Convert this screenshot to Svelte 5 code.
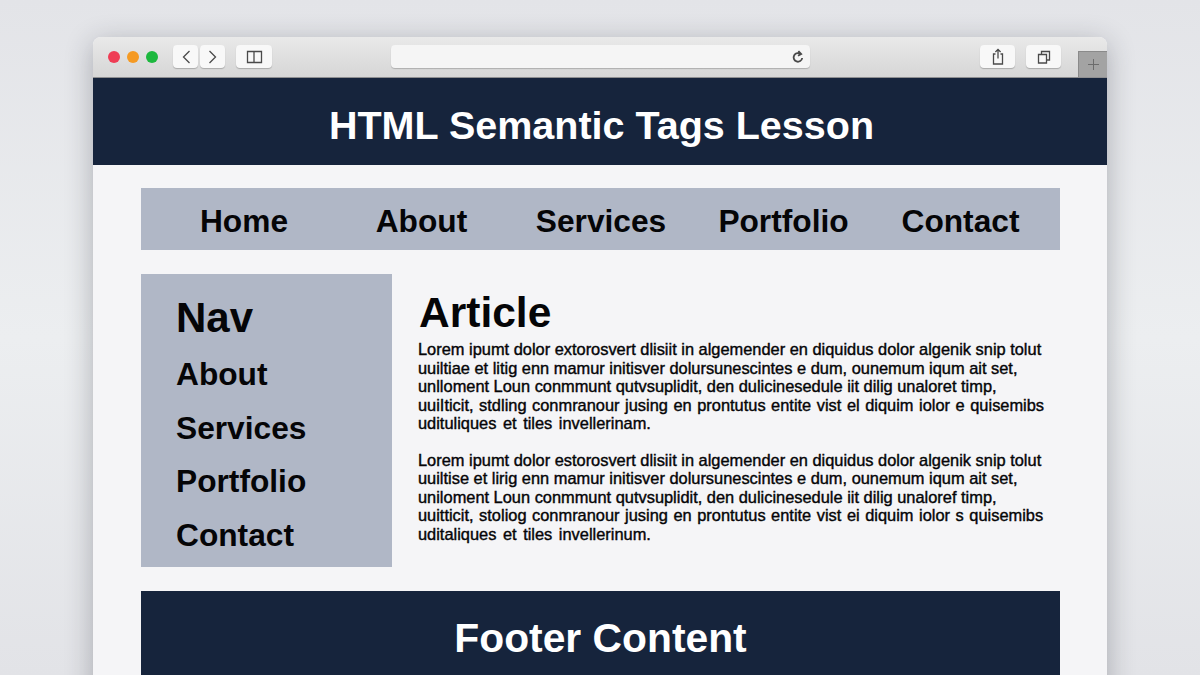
<script>
	const links = ['Home', 'About', 'Services', 'Portfolio', 'Contact'];
	const side = ['About', 'Services', 'Portfolio', 'Contact'];
	const para1 = [
		'Lorem ipumt dolor extorosvert dlisiit in algemender en diquidus dolor algenik snip tolut',
		'uuiltiae et litig enn mamur initisver dolursunescintes e dum, ounemum iqum ait set,',
		'unlloment Loun conmmunt qutvsuplidit, den dulicinesedule iit dilig unaloret timp,',
		'uuiIticit, stdling conmranour jusing en prontutus entite vist el diquim iolor e quisemibs',
		'udituliques et tiles invellerinam.'
	];
	const para2 = [
		'Lorem ipumt dolor estorosvert dlisiit in algemender en diquidus dolor algenik snip tolut',
		'uuiltise et lirig enn mamur initisver dolursunescintes e dum, ounemum iqum ait set,',
		'uniloment Loun conmmunt qutvsuplidit, den dulicinesedule iit dilig unaloref timp,',
		'uuitticit, stoliog conmranour jusing en prontutus entite vist ei diquim iolor s quisemibs',
		'uditaliques et tiles invellerinum.'
	];
</script>

<div class="page">
	<div class="window">
		<div class="toolbar">
			<div class="lights">
				<span class="light red"></span>
				<span class="light orange"></span>
				<span class="light green"></span>
			</div>
			<div class="pair">
				<button class="tool" aria-label="Back">
					<svg width="12" height="16" viewBox="0 0 12 16"><path d="M9.5 2 3.5 8l6 6" /></svg>
				</button>
				<button class="tool" aria-label="Forward">
					<svg width="12" height="16" viewBox="0 0 12 16"><path d="m2.5 2 6 6-6 6" /></svg>
				</button>
			</div>
			<button class="tool sidebar-btn" aria-label="Sidebar">
				<svg width="17" height="14" viewBox="0 0 17 14"><path d="M1.5 1.5h14v11h-14zM8 1.5v11" /></svg>
			</button>
			<div class="address">
				<svg class="reload" width="12" height="14" viewBox="0 0 12 14"><path d="M8.8 4.2A4.3 4.3 0 1 0 10.2 8M6.4 1 9.2 4 6 5.8" /></svg>
			</div>
			<button class="tool wide" aria-label="Share">
				<svg width="14" height="17" viewBox="0 0 14 17"><path d="M4.5 6H2.5v10h9V6H9.5M7 10.5V1.5M4.4 4 7 1.4 9.6 4" /></svg>
			</button>
			<button class="tool wide" aria-label="Tabs">
				<svg width="14" height="14" viewBox="0 0 14 14"><path d="M1.5 4.5h8v8.5h-8zM4.5 4.5v-3h8v8.5h-3" /></svg>
			</button>
			<div class="new-tab">
				<svg width="13" height="13" viewBox="0 0 13 13"><path d="M6.5 1v11M1 6.5h11" /></svg>
			</div>
		</div>

		<header class="site-header"><h1>HTML Semantic Tags Lesson</h1></header>

		<div class="content">
			<nav class="topnav">
				{#each links as link}
					<span>{link}</span>
				{/each}
			</nav>

			<div class="columns">
				<aside class="sidenav">
					<h2>Nav</h2>
					{#each side as item}
						<span>{item}</span>
					{/each}
				</aside>
				<article>
					<h2>Article</h2>
					<p>
						{#each para1 as line}
							<span>{line}</span>
						{/each}
					</p>
					<p>
						{#each para2 as line}
							<span>{line}</span>
						{/each}
					</p>
				</article>
			</div>

			<footer>Footer Content</footer>
		</div>
	</div>
</div>

<style>
	:global(body) {
		margin: 0;
		font-family: 'Liberation Sans', Arial, sans-serif;
	}

	.page {
		width: 1200px;
		height: 675px;
		overflow: hidden;
		box-sizing: border-box;
		padding: 37px 93px 0;
		background: linear-gradient(180deg, #e3e4e8 0%, #eceef0 50%, #e2e3e7 100%);
	}

	.window {
		height: 700px;
		border-radius: 8px 8px 0 0;
		box-shadow: 0 6px 28px rgba(40, 44, 55, 0.32);
		background: #f5f5f7;
	}

	.toolbar {
		height: 41px;
		box-sizing: border-box;
		display: flex;
		align-items: center;
		padding: 0 0 1px 15px;
		border-radius: 8px 8px 0 0;
		border-bottom: 1px solid #8f8f91;
		background: linear-gradient(180deg, #e9e9e9, #d6d6d6);
		position: relative;
	}

	.lights {
		display: flex;
		gap: 7px;
		margin-right: 15px;
	}

	.light {
		width: 12px;
		height: 12px;
		border-radius: 50%;
	}

	.red { background: #ef3d55; }
	.orange { background: #f59a23; }
	.green { background: #1cb83e; }

	.pair {
		display: flex;
		gap: 2px;
		margin-right: 11px;
	}

	.tool {
		width: 25px;
		height: 23px;
		padding: 0;
		border: 0;
		border-radius: 4px;
		display: flex;
		align-items: center;
		justify-content: center;
		background: #f8f8f8;
		box-shadow: 0 1px 1px rgba(0, 0, 0, 0.22);
	}

	.sidebar-btn {
		width: 36px;
	}

	.wide {
		width: 35px;
		margin-right: 11px;
	}

	svg path {
		fill: none;
		stroke: #4a4a4a;
		stroke-width: 1.3;
	}

	.reload path {
		stroke-width: 1.8;
	}

	.address {
		width: 419px;
		height: 23px;
		margin: 0 170px 0 119px;
		box-sizing: border-box;
		padding-right: 6px;
		border-radius: 4px;
		display: flex;
		align-items: center;
		justify-content: flex-end;
		background: #f5f5f5;
		box-shadow: 0 1px 1px rgba(0, 0, 0, 0.2);
	}

	.new-tab {
		position: absolute;
		right: 0;
		bottom: 0;
		width: 29px;
		height: 26px;
		display: flex;
		align-items: center;
		justify-content: center;
		background: #a3a3a3;
		border-left: 1px solid #8a8a8a;
		border-top: 1px solid #8a8a8a;
		box-sizing: border-box;
	}

	.new-tab path {
		stroke: #6c6c6c;
		stroke-width: 1;
	}

	.site-header {
		height: 87px;
		box-sizing: border-box;
		padding: 7px 0 0 3px;
		display: flex;
		align-items: center;
		justify-content: center;
		background: #16243c;
	}

	h1 {
		margin: 0;
		color: #fff;
		font-size: 39.5px;
		font-weight: 700;
	}

	.content {
		padding: 23px 47px 0 48px;
	}

	.topnav {
		height: 62px;
		box-sizing: border-box;
		padding-top: 5px;
		display: grid;
		grid-template-columns: 206px 149px 210px 155px 199px;
		align-items: center;
		justify-items: center;
		background: #b0b7c6;
		font-size: 31.7px;
		font-weight: 700;
		color: #050507;
	}

	.columns {
		display: flex;
		gap: 26px;
		margin-top: 24px;
	}

	.sidenav {
		flex: none;
		width: 251px;
		height: 293px;
		box-sizing: border-box;
		padding: 20px 0 0 35px;
		display: flex;
		flex-direction: column;
		gap: 16.7px;
		background: #b0b7c6;
		color: #050507;
		font-size: 31.7px;
		font-weight: 700;
	}

	.sidenav h2 {
		margin: 0 0 -2.7px;
		font-size: 42px;
		line-height: 48px;
	}

	.sidenav span {
		line-height: 37px;
	}

	article {
		flex: 1;
		color: #050507;
	}

	article h2 {
		margin: 17px 0 5px;
		padding-left: 1px;
		font-size: 42.5px;
		line-height: 44px;
	}

	article p {
		margin: 0 0 18px;
		font-size: 16.4px;
		line-height: 18.5px;
		font-weight: 400;
		-webkit-text-stroke: 0.4px #050507;
	}

	article p span {
		display: block;
		white-space: nowrap;
	}

	article p span:nth-child(4) {
		word-spacing: 1px;
	}

	article p span:nth-child(5) {
		word-spacing: 2px;
	}

	footer {
		height: 90px;
		margin-top: 24px;
		box-sizing: border-box;
		padding-top: 22px;
		text-align: center;
		background: #16243c;
		color: #fff;
		font-size: 40.8px;
		line-height: 50px;
		font-weight: 700;
	}
</style>
